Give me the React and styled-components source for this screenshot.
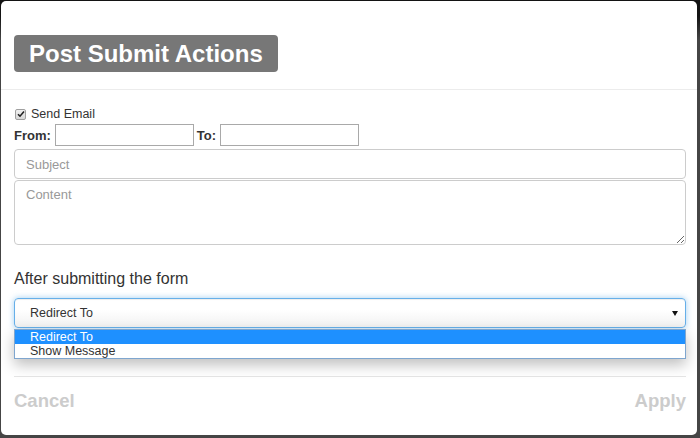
import React, { useState } from 'react';
import styled, { createGlobalStyle } from 'styled-components';

const GlobalStyle = createGlobalStyle`
  html, body {
    margin: 0;
    padding: 0;
  }
  body {
    height: 438px;
    overflow: hidden;
    background: linear-gradient(#131313 0, #131313 16px, #454545 40px);
    font-family: "Liberation Sans", Arial, sans-serif;
    color: #333;
  }
`;

const Modal = styled.div`
  margin: 1px 0 0 1px;
  width: 696px;
  height: 434px;
  background: #fff;
  border-radius: 5px;
  display: flex;
  flex-direction: column;
  overflow: hidden;
`;

const Header = styled.div`
  padding: 34px 0 17px 13px;
  border-bottom: 1px solid #ececec;
`;

const TitleBadge = styled.h1`
  display: inline-block;
  margin: 0;
  padding: 0 15px 0 15px;
  background: #777;
  color: #fff;
  font-size: 24px;
  font-weight: bold;
  line-height: 37px;
  border-radius: 4px;
`;

const Body = styled.div`
  padding: 16px 11px 0 13px;
  display: flex;
  flex-direction: column;
`;

const CheckRow = styled.label`
  display: flex;
  align-items: center;
  gap: 5px;
  height: 16px;
  font-size: 12.5px;
  padding-left: 1px;
`;

const CheckBox = styled.span`
  width: 9px;
  height: 9px;
  border: 1px solid #a0a0a0;
  border-radius: 2px;
  background: linear-gradient(#f0f0f0, #d8d8d8);
  display: flex;
  align-items: center;
  justify-content: center;
  > svg {
    width: 8px;
    height: 8px;
  }
`;

const AddressRow = styled.div`
  display: flex;
  align-items: center;
  margin-top: 2px;
  height: 22px;
`;

const AddressLabel = styled.span`
  font-size: 13px;
  font-weight: bold;
  margin-right: 4px;
  margin-left: ${props => props.spaced ? '3px' : '0'};
`;

const PlainInput = styled.input`
  box-sizing: border-box;
  width: 139px;
  height: 22px;
  border: 1px solid #a9a9a9;
  padding: 1px 3px;
  font-family: inherit;
  font-size: 13px;
  outline: none;
`;

const FieldInput = styled.input`
  box-sizing: border-box;
  width: 100%;
  height: 30px;
  margin-top: 3px;
  padding: 6px 11px;
  border: 1px solid #ccc;
  border-radius: 4px;
  font-family: inherit;
  font-size: 13px;
  color: #555;
  outline: none;
  &::placeholder {
    color: #999;
  }
`;

const FieldArea = styled.textarea`
  box-sizing: border-box;
  display: block;
  width: 100%;
  height: 65px;
  margin-top: 1px;
  padding: 6px 11px;
  border: 1px solid #ccc;
  border-radius: 4px;
  font-family: inherit;
  font-size: 13px;
  color: #555;
  outline: none;
  &::placeholder {
    color: #999;
  }
`;

const SectionTitle = styled.div`
  margin-top: 23px;
  font-size: 16px;
  line-height: 22px;
  color: #333;
`;

const SelectWrap = styled.div`
  position: relative;
  margin-top: 8px;
`;

const SelectBox = styled.div`
  box-sizing: border-box;
  height: 30px;
  display: flex;
  align-items: center;
  justify-content: space-between;
  padding: 0 7px 0 15px;
  border: 1px solid #66afe9;
  border-radius: 4px;
  background: linear-gradient(#fff 40%, #f1f1f1);
  box-shadow: inset 0 1px 1px rgba(0, 0, 0, 0.075), 0 0 6px rgba(102, 175, 233, 0.6);
  font-size: 12.5px;
  color: #333;
`;

const Caret = styled.span`
  width: 0;
  height: 0;
  border-left: 3px solid transparent;
  border-right: 3px solid transparent;
  border-top: 5px solid #111;
`;

const OptionList = styled.div`
  position: absolute;
  top: 31px;
  left: 0;
  right: 0;
  border: 1px solid #7fa6cf;
  background: #fff;
  box-shadow: 0 6px 14px rgba(0, 0, 0, 0.25);
  z-index: 2;
`;

const Option = styled.div`
  height: 14px;
  line-height: 14px;
  padding-left: 15px;
  font-size: 12.5px;
  background: ${props => props.selected ? '#1e90ff' : '#fff'};
  color: ${props => props.selected ? '#fff' : '#333'};
`;

const Footer = styled.div`
  margin: 48px 0 0;
  padding-top: 12px;
  border-top: 1px solid #e5e5e5;
  display: flex;
  justify-content: space-between;
`;

const FooterButton = styled.button`
  background: none;
  border: none;
  padding: 0;
  font-family: inherit;
  font-size: 18.5px;
  font-weight: bold;
  line-height: 24px;
  color: #ccc;
  cursor: pointer;
`;

export default function App() {
  const [action] = useState('Redirect To');
  const options = ['Redirect To', 'Show Message'];

  return (
    <>
      <GlobalStyle />
      <Modal>
        <Header>
          <TitleBadge>Post Submit Actions</TitleBadge>
        </Header>
        <Body>
          <CheckRow>
            <CheckBox>
              <svg viewBox="0 0 8 8">
                <path d="M1 4.2 L3 6.2 L7 1.6" fill="none" stroke="#222" strokeWidth="1.6" />
              </svg>
            </CheckBox>
            Send Email
          </CheckRow>
          <AddressRow>
            <AddressLabel>From:</AddressLabel>
            <PlainInput />
            <AddressLabel spaced>To:</AddressLabel>
            <PlainInput />
          </AddressRow>
          <FieldInput placeholder="Subject" />
          <FieldArea placeholder="Content" />
          <SectionTitle>After submitting the form</SectionTitle>
          <SelectWrap>
            <SelectBox>
              {action}
              <Caret />
            </SelectBox>
            <OptionList>
              {options.map(o => (
                <Option key={o} selected={o === action}>{o}</Option>
              ))}
            </OptionList>
          </SelectWrap>
          <Footer>
            <FooterButton>Cancel</FooterButton>
            <FooterButton>Apply</FooterButton>
          </Footer>
        </Body>
      </Modal>
    </>
  );
}
